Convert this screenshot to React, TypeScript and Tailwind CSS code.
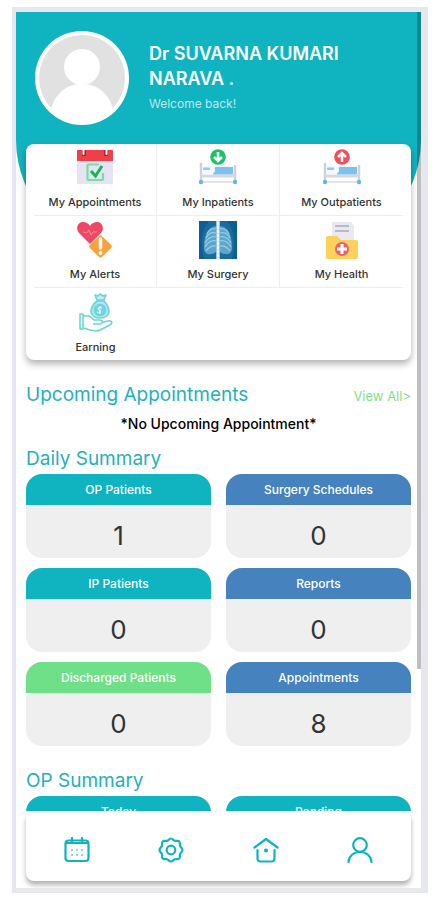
import React from "react";

const teal = "#10b4c0";

function AppointmentIcon() {
  return (
    <svg viewBox="0 0 36 36" className="size-9" aria-hidden="true">
      <rect y="1" width="36" height="34" rx="1" fill="#e6e4f2" />
      <path d="M1 1h34a1 1 0 0 1 1 1v10H0V2a1 1 0 0 1 1-1Z" fill="#ef4048" />
      <path d="M7 1v6M29 1v6" stroke="#a32a38" strokeWidth="4" />
      <path d="M6.500 1v4M29.500 1v4" stroke="#f4eef5" strokeWidth="2" strokeLinecap="round" />
      <path d="M22 15.500H11.500a1 1 0 0 0-1 1V30a1 1 0 0 0 1 1H25a1 1 0 0 0 1-1v-6" fill="none" stroke="#7bdca3" strokeWidth="2.200" />
      <path d="m14 22 4.500 5L25 17" fill="none" stroke="#12b85a" strokeWidth="3" />
    </svg>
  );
}

function BedIcon({ color, up }: { color: string; up?: boolean }) {
  return (
    <svg viewBox="0 0 38 36" className="h-9 w-[38px]" aria-hidden="true">
      <path d="M2 14v18M36 16v16" stroke="#cfd2dc" strokeWidth="2.500" />
      <path d="M2 27h34" stroke="#d5d8e2" strokeWidth="3" />
      <path d="M3 33h32" stroke="#c9cbd4" strokeWidth="1" />
      <rect x="4" y="17" width="30" height="8.500" fill="#f4f8fd" />
      <path d="M14 25.500c0-2 2-2 2-4 0-2-1-3.500 1-3.500h17v7.500Z" fill="#7dc1ec" />
      <rect x="4" y="18.500" width="7" height="2.500" rx="1" fill="#8fc9f0" />
      <circle cx="2" cy="33" r="2.200" fill="#66b5ec" />
      <circle cx="36" cy="33" r="2.200" fill="#66b5ec" />
      <circle cx="19" cy="8" r="7.800" fill={color} />
      <path
        d={up ? "M19 13V4M15 8l4-4 4 4" : "M19 3v9M15 8l4 4 4-4"}
        fill="none"
        stroke="#fff"
        strokeWidth="2.500"
      />
    </svg>
  );
}

function AlertIcon() {
  return (
    <svg viewBox="0 0 38 38" className="size-[38px]" aria-hidden="true">
      <path
        d="M14 23 3 12C-1 7 2 1 7 1c3 0 5 1 7 4 2-3 4-4 7-4 5 0 8 6 4 11Z"
        fill="#ee4866"
      />
      <path d="m7 11 4 1 2-3 2 5 2-3h4" fill="none" stroke="#f88a9b" strokeWidth="1" />
      <rect x="16" y="17" width="17" height="17" rx="2" transform="rotate(45 24.500 25.500)" fill="#f9a13a" />
      <path d="M24.500 18v9" stroke="#fff" strokeWidth="3.500" strokeLinecap="round" />
      <circle cx="24.500" cy="32" r="1.900" fill="#fff" />
    </svg>
  );
}

function SurgeryIcon() {
  return (
    <svg viewBox="0 0 38 38" className="size-[38px]" aria-hidden="true">
      <rect width="38" height="38" fill="#1a6c9f" />
      <path d="M0 0h10C4 8 2 16 3 28l2 10H0ZM38 0H28c6 8 8 16 7 28l-2 10h5Z" fill="#0e5d94" />
      <path d="M17 5C8 6 5 15 5 28c1 7 8 6 12 3ZM21 5c9 1 12 10 12 23-1 7-8 6-12 3Z" fill="#5ba6ca" />
      <path
        d="M17 8c-4-1-7 1-9 5M17 12c-4-1-8 1-10 5M17 16c-4-1-8 1-11 6M17 20c-4-1-8 1-11 6M17 25c-4-1-7 1-10 5M21 8c4-1 7 1 9 5M21 12c4-1 8 1 10 5M21 16c4-1 8 1 11 6M21 20c4-1 8 1 11 6M21 25c4-1 7 1 10 5"
        fill="none"
        stroke="#9ccde2"
        strokeWidth="1.200"
      />
      <path d="M19 0v38" stroke="#c4e4f0" strokeWidth="3.500" />
      <path d="M19 1v37" stroke="#eaf6fb" strokeWidth="2" strokeDasharray="3 1" />
    </svg>
  );
}

function HealthIcon() {
  return (
    <svg viewBox="0 0 32 38" className="h-[38px] w-8" aria-hidden="true">
      <path d="M6 1h19l3 4v20H6Z" fill="#e9e9f2" />
      <path d="M9 5h14M9 10h14" stroke="#b9bac8" strokeWidth="1.800" />
      <path d="M2 15h9l4 4h15a2 2 0 0 1 2 2v15a2 2 0 0 1-2 2H2a2 2 0 0 1-2-2V17a2 2 0 0 1 2-2Z" fill="#fbd15c" />
      <circle cx="16" cy="28" r="7" fill="#e8636f" />
      <path d="M16 23v10M11 28h10" stroke="#fff" strokeWidth="3" />
    </svg>
  );
}

function EarningIcon() {
  return (
    <svg viewBox="0 0 34 40" className="h-10 w-[34px]" fill="none" aria-hidden="true">
      <defs>
        <linearGradient id="earning" x1="0" y1="1" x2="1" y2="0">
          <stop offset="0" stopColor="#5fe3c0" />
          <stop offset="1" stopColor="#7cc4f0" />
        </linearGradient>
      </defs>
      <g stroke="url(#earning)" strokeWidth="1.600" strokeLinejoin="round">
        <path d="M18 7 16 2l3 1 2-2 3 2 3-1-2 5Z" fill="#c5ebf8" />
        <path d="M18 8c-4 3-6 7-6 11 1 8 17 8 18 0 0-4-2-8-5-11Z" fill="#b0e4f6" />
        <circle cx="21" cy="17" r="5.500" fill="#6fd3ea" />
        <path d="M1 21h3v15H1ZM4 23c6-1 8 1 11 4h6c3 0 3 4 0 4h-7M22 30l7-2c4-1 5 2 2 4l-10 5c-5 3-11-1-17-2" />
      </g>
      <path d="M23 15c-3-2-5 0-3 2s2 4-2 2M21 13v8" stroke="#fff" />
    </svg>
  );
}

const menu = [
  { label: "My Appointments", icon: <AppointmentIcon /> },
  { label: "My Inpatients", icon: <BedIcon color="#18c368" /> },
  { label: "My Outpatients", icon: <BedIcon color="#f04f56" up /> },
  { label: "My Alerts", icon: <AlertIcon /> },
  { label: "My Surgery", icon: <SurgeryIcon /> },
  { label: "My Health", icon: <HealthIcon /> },
  { label: "Earning", icon: <EarningIcon /> },
];

const daily = [
  { label: "OP Patients", value: 1, color: "bg-[#10b4c0]" },
  { label: "Surgery Schedules", value: 0, color: "bg-[#4682bd]" },
  { label: "IP Patients", value: 0, color: "bg-[#10b4c0]" },
  { label: "Reports", value: 0, color: "bg-[#4682bd]" },
  { label: "Discharged Patients", value: 0, color: "bg-[#70e088]" },
  { label: "Appointments", value: 8, color: "bg-[#4682bd]" },
];

const opSummary = [
  { label: "Today", value: 1, color: "bg-[#10b4c0]" },
  { label: "Pending", value: 0, color: "bg-[#10b4c0]" },
];

const navItems = [
  {
    label: "Calendar",
    icon: (
      <>
        <rect x="1.500" y="3.500" width="23" height="20.500" rx="3" />
        <path d="M8 1v5M18 1v5M2 6h22" />
        <path d="M8 13h0M13 13h0M18 13h0M8 18h0M13 18h0M18 18h0" strokeOpacity="0.6" />
      </>
    ),
  },
  {
    label: "Settings",
    icon: (
      <>
        <path d="M13 1.500c1.800 0 2.300 1.800 3.800 2.300s3.300-.6 4.500.7.200 3 .8 4.500 2.400 2 2.400 4-1.800 2.400-2.400 4 .4 3.300-.8 4.500-3 .2-4.500.8-2 2.200-3.800 2.200-2.300-1.600-3.800-2.200-3.300.4-4.500-.8-.2-3-.8-4.500-2.400-2-2.400-4 1.800-2.400 2.400-4-.4-3.300.8-4.500 3-.2 4.500-.7S11.200 1.500 13 1.500Z" />
        <circle cx="13" cy="13" r="4.300" />
      </>
    ),
  },
  {
    label: "Home",
    icon: (
      <>
        <path d="M1.500 10.500 13 2l11.500 8.500M4.500 13v8.500a3 3 0 0 0 3 3h11a3 3 0 0 0 3-3V13" />
        <circle cx="13" cy="13.500" r="1.300" fill={teal} strokeWidth="1.500" />
      </>
    ),
  },
  {
    label: "Profile",
    icon: (
      <>
        <circle cx="13" cy="8" r="6.800" />
        <path d="M1.500 25c.5-6 5-10 11.500-10s11 4 11.500 10" />
      </>
    ),
  },
];

function SummaryGrid({ items }: { items: typeof daily }) {
  return (
    <div className="grid grid-cols-2 gap-x-[15px] gap-y-[10px]">
      {items.map((item) => (
        <div key={item.label} className="overflow-hidden rounded-2xl bg-[#efefef] text-center">
          <div className={`${item.color} py-2 text-xs leading-[15px] font-medium text-white`}>
            {item.label}
          </div>
          <div className="pt-[14px] pb-[6px] text-[26px] leading-[33px] text-[#333]">{item.value}</div>
        </div>
      ))}
    </div>
  );
}

export default function App() {
  return (
    <div className="h-screen bg-white py-[7px] pr-[13px] pl-3 font-['Inter',sans-serif]">
      <div className="relative flex h-full flex-col overflow-hidden border-y-[5px] border-r-[7px] border-l-4 border-[#e7e8ee] bg-white">
        <main className="min-h-0 flex-1 overflow-hidden">
          <header className="flex h-60 items-start gap-5 rounded-b-[112px] bg-[#10b4c0] px-[19px] pt-[19px] text-white">
            <svg viewBox="0 0 94 94" className="size-[94px] shrink-0" role="img" aria-label="Profile photo">
              <defs>
                <clipPath id="avatar">
                  <circle cx="47" cy="47" r="44" />
                </clipPath>
              </defs>
              <circle cx="47" cy="47" r="47" fill="#fff" />
              <circle cx="47" cy="47" r="43" fill="#e1e1e1" />
              <g fill="#fff" clipPath="url(#avatar)">
                <circle cx="47" cy="36" r="18" />
                <path d="M15 94V84c2-18 14-31 32-31s30 13 32 31v10Z" />
              </g>
            </svg>
            <div className="pt-[10px]">
              <h1 className="max-w-52 text-lg leading-[25px] font-semibold">Dr SUVARNA KUMARI NARAVA .</h1>
              <p className="mt-[5px] text-xs text-[#b9e9ec]">Welcome back!</p>
            </div>
          </header>

          <div className="relative -mt-[108px] mr-[10px] ml-[10px] grid grid-cols-3 rounded-lg bg-white px-2 shadow-[0_4px_7px_rgba(0,0,0,0.3)]">
            {menu.map((item, i) => (
              <button
                key={item.label}
                type="button"
                className={`flex h-[72px] flex-col items-center justify-between border-[#eeeeef] pt-[5px] pb-[5px] text-[11px] leading-4 font-medium text-[#333] ${
                  i < 6 ? "border-b" : ""
                } ${i < 6 && i % 3 < 2 ? "border-r" : ""}`}
              >
                {item.icon}
                <span className="whitespace-nowrap">{item.label}</span>
              </button>
            ))}
          </div>

          <div className="px-[10px] pt-[22px]">
            <section>
              <div className="flex items-center justify-between">
                <h2 className="text-[19px] leading-[26px] text-[#27b0ba]">Upcoming Appointments</h2>
                <a href="#appointments" className="pt-1 text-[13px] text-[#7ddf91]">
                  View All&gt;
                </a>
              </div>
              <p className="pt-[6px] text-center text-sm leading-5 font-medium text-black">
                *No Upcoming Appointment*
              </p>
            </section>
            <section className="pt-3">
              <h2 className="pb-[2px] text-[19px] leading-[26px] text-[#27b0ba]">Daily Summary</h2>
              <SummaryGrid items={daily} />
            </section>
            <section className="pt-[22px]">
              <h2 className="pb-[2px] text-[19px] leading-[26px] text-[#27b0ba]">OP Summary</h2>
              <SummaryGrid items={opSummary} />
            </section>
          </div>
        </main>

        <nav className="mx-[10px] mb-[7px] flex h-[70px] shrink-0 rounded-lg bg-white px-1 pt-2 shadow-[0_4px_5px_rgba(0,0,0,0.3)]">
          {navItems.map((item) => (
            <button key={item.label} type="button" aria-label={item.label} className="flex flex-1 items-center justify-center">
              <svg
                viewBox="0 0 26 26"
                className="size-[26px]"
                fill="none"
                stroke={teal}
                strokeWidth="2.200"
                strokeLinecap="round"
                strokeLinejoin="round"
              >
                {item.icon}
              </svg>
            </button>
          ))}
        </nav>

        {/* scroll thumb */}
        <div className="absolute top-0 right-0 h-3/4 w-1 bg-black/25" />
      </div>
    </div>
  );
}
